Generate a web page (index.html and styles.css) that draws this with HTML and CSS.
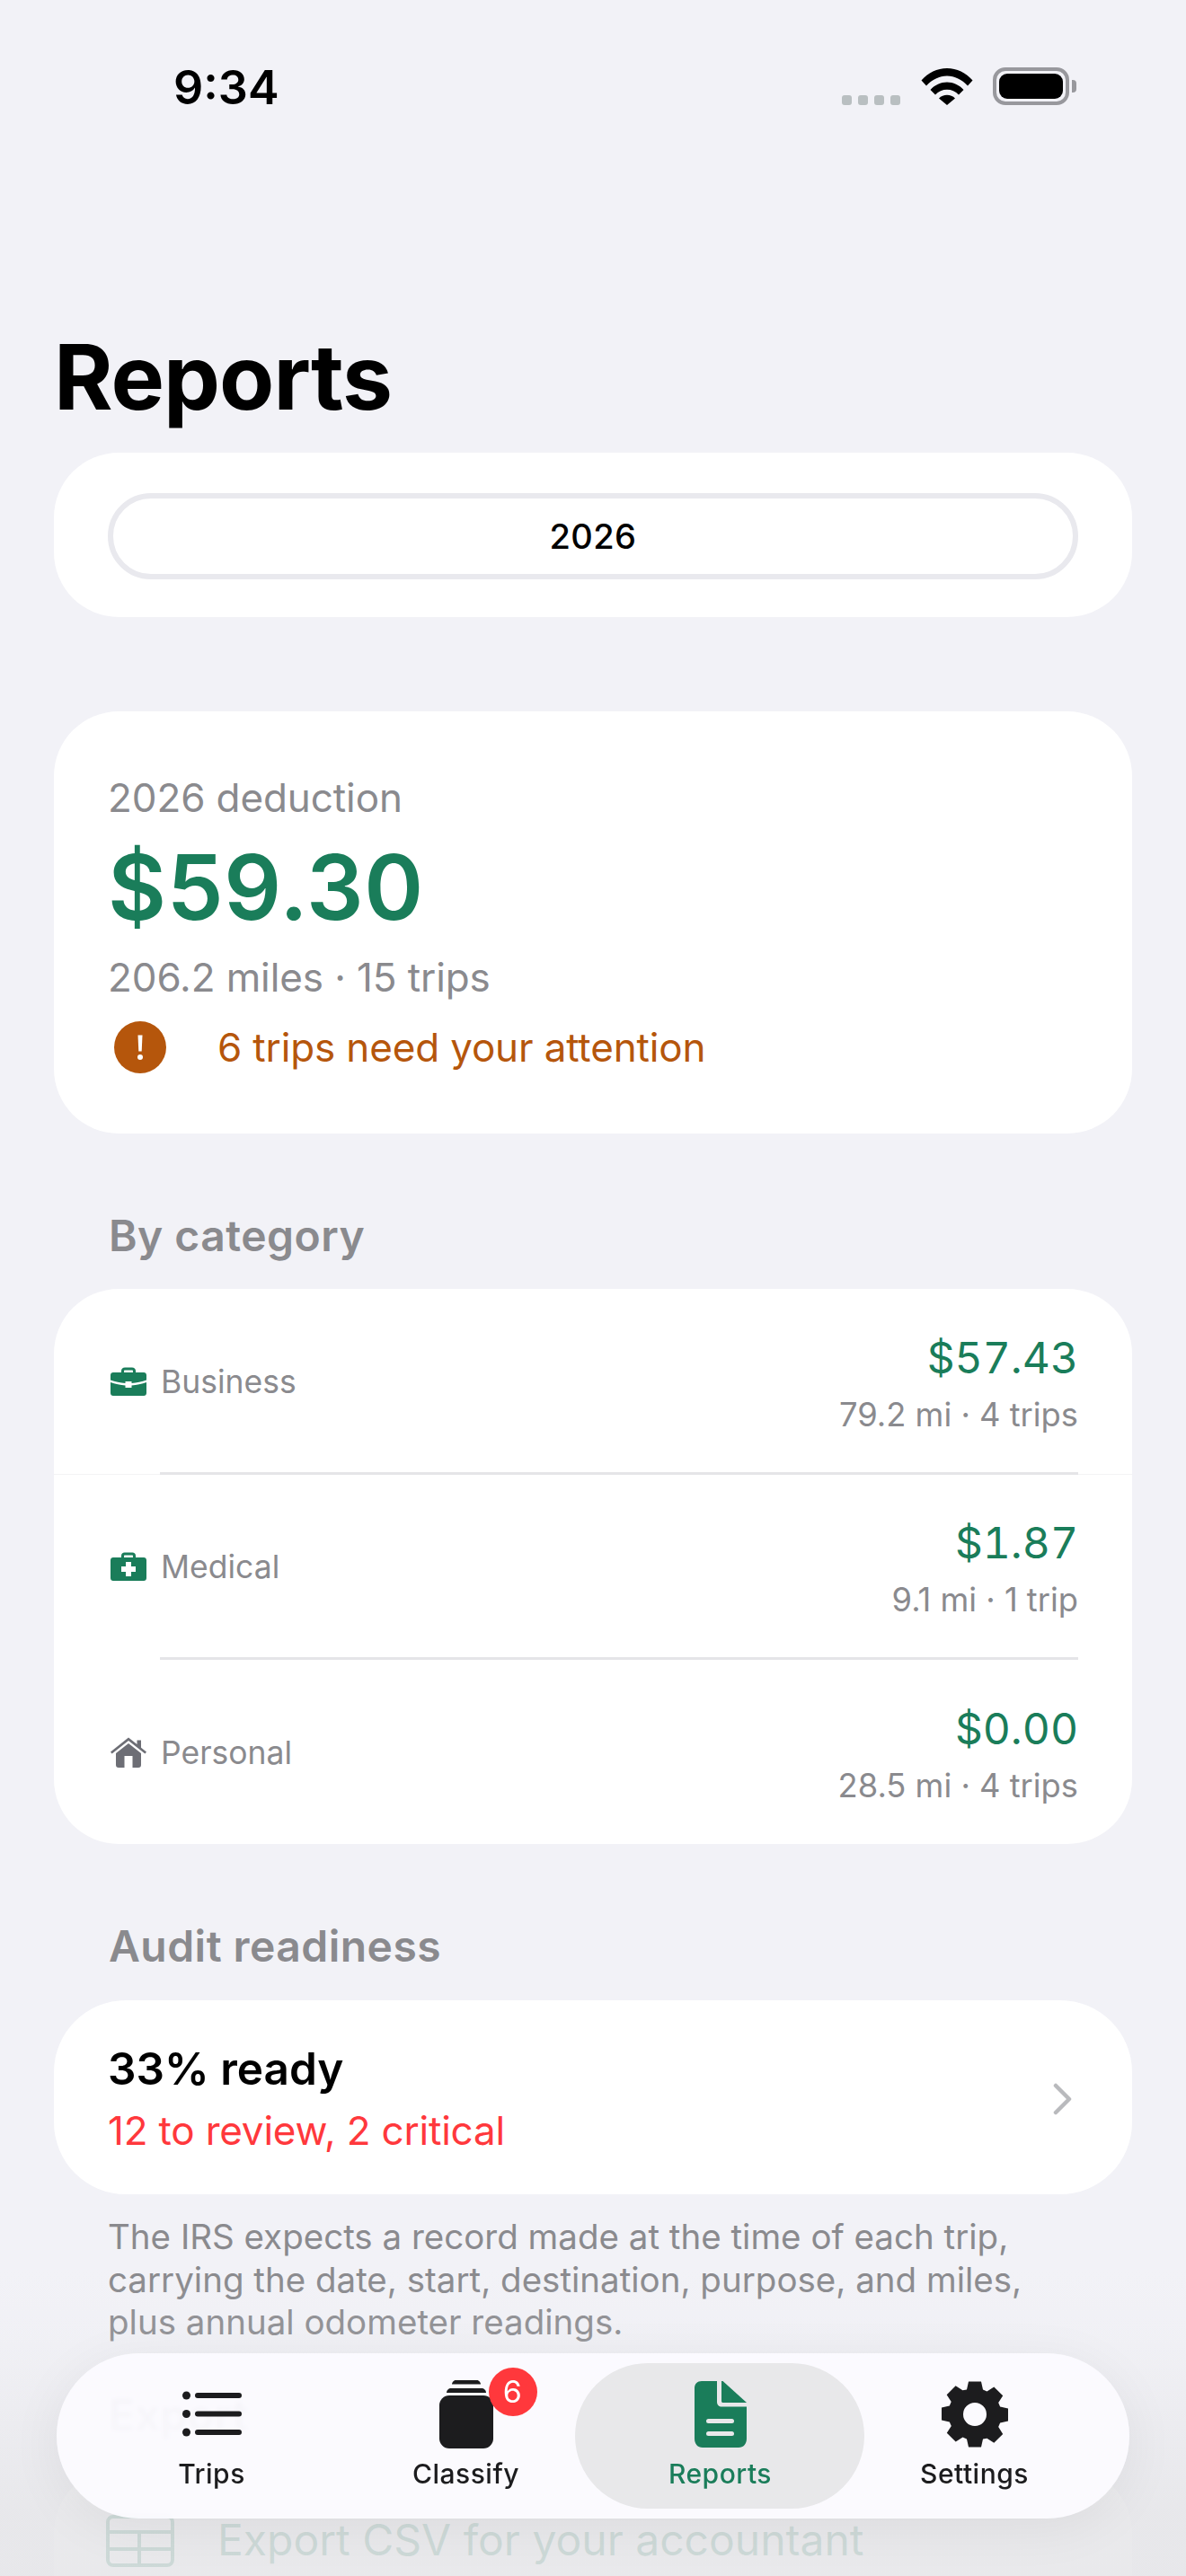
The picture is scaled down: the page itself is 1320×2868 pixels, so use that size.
FILE: index.html
```html
<!DOCTYPE html>
<html>
<head>
    <title>Reports</title>
    <link rel="stylesheet" href="styles.css">
</head>
<body>

<div class="screen">
    <div class="status-bar">
        <span class="clock">9:34</span>
        <div class="status-icons">
            <div class="signal"><i></i><i></i><i></i><i></i></div>
            <svg class="wifi" width="58" height="42" viewBox="0 0 58 42">
                <path d="M0.5 14.5C8 6 18 1 29 1s21 5 28.500 13.500L52 20.500C45.500 13.500 37.500 9.500 29 9.500S12.500 13.500 6 20.500Z"/>
                <path d="M10.500 25C15.500 19.500 22 16.500 29 16.500s13.500 3 18.500 8.500L42 30.500C38.500 26.800 34 24.800 29 24.800s-9.500 2-13 5.700Z"/>
                <path d="M20 34.500C22.500 32 25.500 30.800 29 30.800s6.500 1.200 9 3.700L29 42Z"/>
            </svg>
            <div class="battery"><div class="battery-fill"></div></div>
            <div class="battery-cap"></div>
        </div>
    </div>

    <h1 class="page-title">Reports</h1>

    <div class="card year-card">
        <div class="year-pill">2026</div>
    </div>

    <div class="card hero-card">
        <div class="hero-line">2026 deduction</div>
        <div class="hero-amount">$59.30</div>
        <div class="hero-line hero-miles">206.2 miles · 15 trips</div>
        <div class="attention">
            <svg class="attention-icon" width="58" height="58" viewBox="0 0 58 58">
                <circle cx="29" cy="29" r="29" fill="#b5560c"/>
                <path d="M26.500 15.500h5l-.8 18h-3.400Z" fill="#fff"/>
                <circle cx="29" cy="40" r="3" fill="#fff"/>
            </svg>
            <span>6 trips need your attention</span>
        </div>
    </div>

    <h2 class="section-title">By category</h2>
    <div class="card category-card">
        <div class="category-row">
            <div class="category-name">
                <svg class="category-icon" width="40" height="32" viewBox="0 0 40 32" fill="#1a7d5a">
                    <path d="M12 7V4.500C12 2 13.500 .5 16 .5h8c2.500 0 4 1.500 4 4V7h-3V4.500c0-.7-.4-1-1-1h-8c-.6 0-1 .3-1 1V7Z"/>
                    <path d="M3 6h34c1.700 0 3 1.300 3 3v5.500c-5 2-11 3-16.500 3.400V16h-7v1.900C11 17.500 5 16.500 0 14.500V9c0-1.700 1.300-3 3-3Z"/>
                    <path d="M0 17c5 2 11 3 16.500 3.400V23h7v-2.600C29 20 35 19 40 17v12c0 1.700-1.300 3-3 3H3c-1.700 0-3-1.300-3-3Z"/>
                </svg>
                <span>Business</span>
            </div>
            <div class="category-nums">
                <div class="category-amount">$57.43</div>
                <div class="category-sub">79.2 mi · 4 trips</div>
            </div>
        </div>
        <div class="divider-wrap first"><div class="divider"></div></div>
        <div class="category-row">
            <div class="category-name">
                <svg class="category-icon" width="40" height="32" viewBox="0 0 40 32" fill="#1a7d5a">
                    <path fill-rule="evenodd" d="M12 6V4C12 1.800 13.500 .5 15.500 .5h9C26.500 .5 28 1.800 28 4v2h9c1.700 0 3 1.300 3 3v20c0 1.700-1.300 3-3 3H3c-1.700 0-3-1.300-3-3V9c0-1.700 1.300-3 3-3ZM15 6h10V4.500c0-.7-.4-1-1-1h-8c-.6 0-1 .3-1 1ZM17 11v5h-5v6h5v5h6v-5h5v-6h-5v-5Z"/>
                </svg>
                <span>Medical</span>
            </div>
            <div class="category-nums">
                <div class="category-amount">$1.87</div>
                <div class="category-sub">9.1 mi · 1 trip</div>
            </div>
        </div>
        <div class="divider-wrap"><div class="divider"></div></div>
        <div class="category-row category-row-last">
            <div class="category-name">
                <svg class="category-icon" width="40" height="34" viewBox="0 0 40 34" fill="#6d6e75">
                    <path d="M0 16.500 20 .5l9.500 7.600V3.500h4.500v8.200l6 4.800-1.600 2L20 4 1.600 18.500Z"/>
                    <path fill-rule="evenodd" d="M20 7l14 11v13c0 1.700-1 3-3 3H9c-2 0-3-1.300-3-3V18ZM15.500 21v13h9V21Z"/>
                </svg>
                <span>Personal</span>
            </div>
            <div class="category-nums">
                <div class="category-amount">$0.00</div>
                <div class="category-sub">28.5 mi · 4 trips</div>
            </div>
        </div>
    </div>

    <h2 class="section-title">Audit readiness</h2>
    <div class="card audit-card">
        <div>
            <div class="audit-title">33% ready</div>
            <div class="audit-sub">12 to review, 2 critical</div>
        </div>
        <svg class="chevron" width="22" height="36" viewBox="0 0 22 36">
            <path d="M3 3l15 15L3 33" fill="none" stroke="#b9babd" stroke-width="4.500" stroke-linecap="round" stroke-linejoin="round"/>
        </svg>
    </div>
    <p class="note">The IRS expects a record made at the time of each trip, carrying the date, start, destination, purpose, and miles, plus annual odometer readings.</p>

    <h2 class="section-title export-title">Export</h2>
    <div class="card export-card">
        <svg class="export-icon" width="76" height="58" viewBox="0 0 76 58">
            <rect x="2" y="2" width="72" height="54" rx="6" fill="none" stroke="#1a7d5a" stroke-width="4"/>
            <path d="M2 19h72M2 38h72M37 19v37" fill="none" stroke="#1a7d5a" stroke-width="4"/>
        </svg>
        <span>Export CSV for your accountant</span>
    </div>

    <div class="scroll-fade"></div>

    <nav class="tab-bar">
        <div class="tab">
            <svg class="tab-icon" width="66" height="76" viewBox="0 0 66 76" fill="#1c1c1e">
                <circle cx="4.500" cy="17" r="4.500"/><circle cx="4.500" cy="37.500" r="4.500"/><circle cx="4.500" cy="58" r="4.500"/>
                <rect x="14" y="14" width="52" height="6" rx="3"/><rect x="14" y="34.500" width="52" height="6" rx="3"/><rect x="14" y="55" width="52" height="6" rx="3"/>
            </svg>
            <span>Trips</span>
        </div>
        <div class="tab">
            <div class="tab-icon-wrap">
                <svg class="tab-icon" width="60" height="76" viewBox="0 0 60 76" fill="#1c1c1e">
                    <path d="M14 4.500C14 2.500 16 0 18 0h24c2 0 4 2.500 4 4.500Z"/>
                    <path d="M8 14C8 11 10.500 9 13 9h34c2.500 0 5 2 5 5Z"/>
                    <rect x="0" y="20" width="60" height="59" rx="11" transform="translate(0 -3)"/>
                </svg>
                <span class="badge">6</span>
            </div>
            <span>Classify</span>
        </div>
        <div class="tab tab-active">
            <svg class="tab-icon" width="58" height="76" viewBox="0 0 58 76">
                <path d="M8 1h17v23c0 3.500 2 5.500 5.500 5.500H58V65c0 6-3.500 10-9 10H9c-5.500 0-9-4-9-10V9c0-5 3-8 8-8Z" fill="#1a7d5a"/>
                <path d="M30 1h1.500L58 25v0H32c-1.500 0-2-.5-2-2Z" fill="#1a7d5a"/>
                <rect x="13" y="43" width="31" height="5" rx="2.500" fill="#e8e8ea"/>
                <rect x="13" y="57" width="31" height="5" rx="2.500" fill="#e8e8ea"/>
            </svg>
            <span>Reports</span>
        </div>
        <div class="tab">
            <svg class="tab-icon" width="74" height="76" viewBox="-37 -38 74 76" fill="#1c1c1e">
                <path fill-rule="evenodd" d="M-7-36.500h14l2 9 4.500 1.900 7.800-5 9.900 9.900-5 7.800 1.900 4.500 9 2v14l-9 2-1.900 4.500 5 7.800-9.900 9.900-7.800-5L9 27.500l-2 9H-7l-2-9-4.500-1.900-7.800 5-9.900-9.900 5-7.800L-28.200 8.500l-9-2v-14l9-2 1.900-4.500-5-7.800 9.900-9.900 7.800 5L-9-27.500ZM0-13a13 13 0 1 0 0 26A13 13 0 0 0 0-13Z"/>
            </svg>
            <span>Settings</span>
        </div>
    </nav>
</div>

</body>
</html>
```
FILE: styles.css
```css
:root {
    --bg: #f2f2f7;
    --green: #1a7d5a;
    --gray: #8a8a8e;
    --ink: #1c1c1e;
}

html, body {
    margin: 0;
    padding: 0;
    background: var(--bg);
}

.screen {
    position: relative;
    width: 1320px;
    height: 2868px;
    overflow: hidden;
    font-family: Inter, "Liberation Sans", sans-serif;
    color: #000;
}

/* status bar */
.status-bar {
    height: 190px;
    display: flex;
    justify-content: space-between;
    align-items: flex-start;
    padding: 0 0 0 193px;
    box-sizing: border-box;
}

.clock {
    font-size: 52px;
    font-weight: 600;
    line-height: 60px;
    margin-top: 68px;
}

.status-icons {
    display: flex;
    align-items: flex-start;
    margin: 75px 122px 0 0;
}

.signal {
    display: flex;
    gap: 7px;
    margin: 31px 23px 0 0;
}

.signal i {
    width: 11px;
    height: 11px;
    border-radius: 3px;
    background: #b9bfc1;
}

.wifi {
    margin-right: 22px;
}

.wifi path {
    fill: #000;
}

.battery {
    width: 71px;
    height: 28px;
    border: 4px solid #98989d;
    border-radius: 14px;
    padding: 3px;
}

.battery-fill {
    width: 100%;
    height: 100%;
    background: #000;
    border-radius: 9px;
}

.battery-cap {
    width: 5px;
    height: 14px;
    margin: 14px 0 0 3px;
    background: #98989d;
    border-radius: 0 4px 4px 0;
}

/* page */
.page-title {
    font-size: 100px;
    font-weight: 700;
    line-height: 120px;
    letter-spacing: -1px;
    margin: 170px 0 24px 60px;
}

.card {
    background: #fff;
    margin: 0 60px;
    border-radius: 72px;
}

.year-card {
    padding: 45px 60px 42px;
}

.year-pill {
    height: 96px;
    box-sizing: border-box;
    border: 6px solid #e9e9ee;
    border-radius: 48px;
    text-align: center;
    font-size: 38px;
    font-weight: 500;
    letter-spacing: .4px;
    line-height: 84px;
}

.hero-card {
    margin-top: 105px;
    padding: 66px 60px;
}

.hero-line {
    font-size: 44px;
    line-height: 60px;
    color: var(--gray);
    letter-spacing: -.1px;
}

.hero-amount {
    font-size: 100px;
    font-weight: 600;
    line-height: 120px;
    letter-spacing: .6px;
    color: var(--green);
    margin-top: 10px;
}

.hero-miles {
    margin-top: 10px;
}

.attention {
    display: flex;
    align-items: center;
    gap: 57px;
    margin: 18px 0 0 7px;
    font-size: 44px;
    line-height: 60px;
    letter-spacing: -.15px;
    color: #b5560c;
}

.section-title {
    font-size: 48px;
    font-weight: 600;
    line-height: 60px;
    letter-spacing: .45px;
    color: var(--gray);
    margin: 84px 0 29px 121px;
}

.category-row {
    height: 204px;
    box-sizing: border-box;
    padding: 2px 60px 0 63px;
    display: flex;
    justify-content: space-between;
    align-items: center;
}

.category-row-last {
    height: 206px;
}

.category-name {
    display: flex;
    align-items: center;
    gap: 16px;
    font-size: 35.500px;
    color: var(--gray);
}

.category-nums {
    margin-top: 4px;
}

.category-amount {
    font-size: 48px;
    line-height: 60px;
    font-feature-settings: "tnum";
    color: var(--green);
    text-align: right;
}

.category-sub {
    font-size: 36.300px;
    line-height: 48px;
    color: var(--gray);
    text-align: right;
    margin-top: 9px;
}

.divider-wrap {
    height: 2px;
    padding-left: 118px;
    padding-right: 60px;
}

.divider-wrap.first {
    box-shadow: 0 1px 0 #f3f3f5;
}

.divider {
    height: 3px;
    background: #e5e5e8;
}

.audit-card {
    height: 216px;
    box-sizing: border-box;
    margin-top: 30px;
    padding: 46px 66px 0 60px;
    display: flex;
    justify-content: space-between;
    align-items: flex-start;
    border-radius: 80px;
}

.audit-title {
    font-size: 49.500px;
    font-weight: 600;
    line-height: 60px;
}

.audit-sub {
    font-size: 44px;
    line-height: 56px;
    letter-spacing: -.2px;
    color: #ff383c;
    margin-top: 11px;
}

.chevron {
    margin-top: 46px;
}

.note {
    font-size: 38.500px;
    line-height: 47.500px;
    color: var(--gray);
    margin: 24px 120px 0 120px;
}

.export-title {
    margin-top: 49px;
}

.export-card {
    height: 200px;
    box-sizing: border-box;
    padding: 50px 60px 0 58px;
    display: flex;
    align-items: flex-start;
    gap: 48px;
    font-size: 48px;
    line-height: 60px;
    color: var(--green);
}

.export-icon {
    margin-top: 2px;
}

/* bottom fade under the tab bar */
.scroll-fade {
    position: absolute;
    left: 0;
    right: 0;
    bottom: 0;
    height: 340px;
    background: linear-gradient(to bottom, rgba(230, 230, 233, 0) 0%, rgba(230, 230, 233, .12) 21%, rgba(230, 230, 233, .88) 80%, rgba(230, 230, 233, .88) 100%);
}

.tab-bar {
    position: absolute;
    left: 63px;
    top: 2620px;
    width: 1194px;
    height: 184px;
    box-sizing: border-box;
    padding: 0 31px;
    display: grid;
    grid-template-columns: repeat(4, 283px);
    background: rgba(252, 251, 255, .93);
    backdrop-filter: blur(2px);
    border-radius: 92px;
    box-shadow: 0 10px 60px rgba(0, 0, 0, .06);
}

.tab {
    position: relative;
    display: flex;
    flex-direction: column;
    align-items: center;
    padding-top: 30px;
    font-size: 30px;
    font-weight: 500;
    line-height: 38px;
    letter-spacing: .5px;
    color: var(--ink);
}

.tab span {
    position: relative;
}

.tab-icon {
    position: relative;
    display: block;
    margin-bottom: 9px;
}

.tab-icon-wrap {
    position: relative;
}

.badge {
    position: absolute !important;
    left: 55px;
    top: -14px;
    width: 54px;
    height: 54px;
    border-radius: 50%;
    background: #ff383c;
    color: #fff;
    font-size: 34px;
    font-weight: 400;
    line-height: 54px;
    text-align: center;
}

.tab-active {
    color: var(--green);
}

.tab-active::before {
    content: "";
    position: absolute;
    left: -20px;
    right: -19px;
    top: 11px;
    bottom: 11px;
    background: #e8e8ea;
    border-radius: 81px;
}
```
